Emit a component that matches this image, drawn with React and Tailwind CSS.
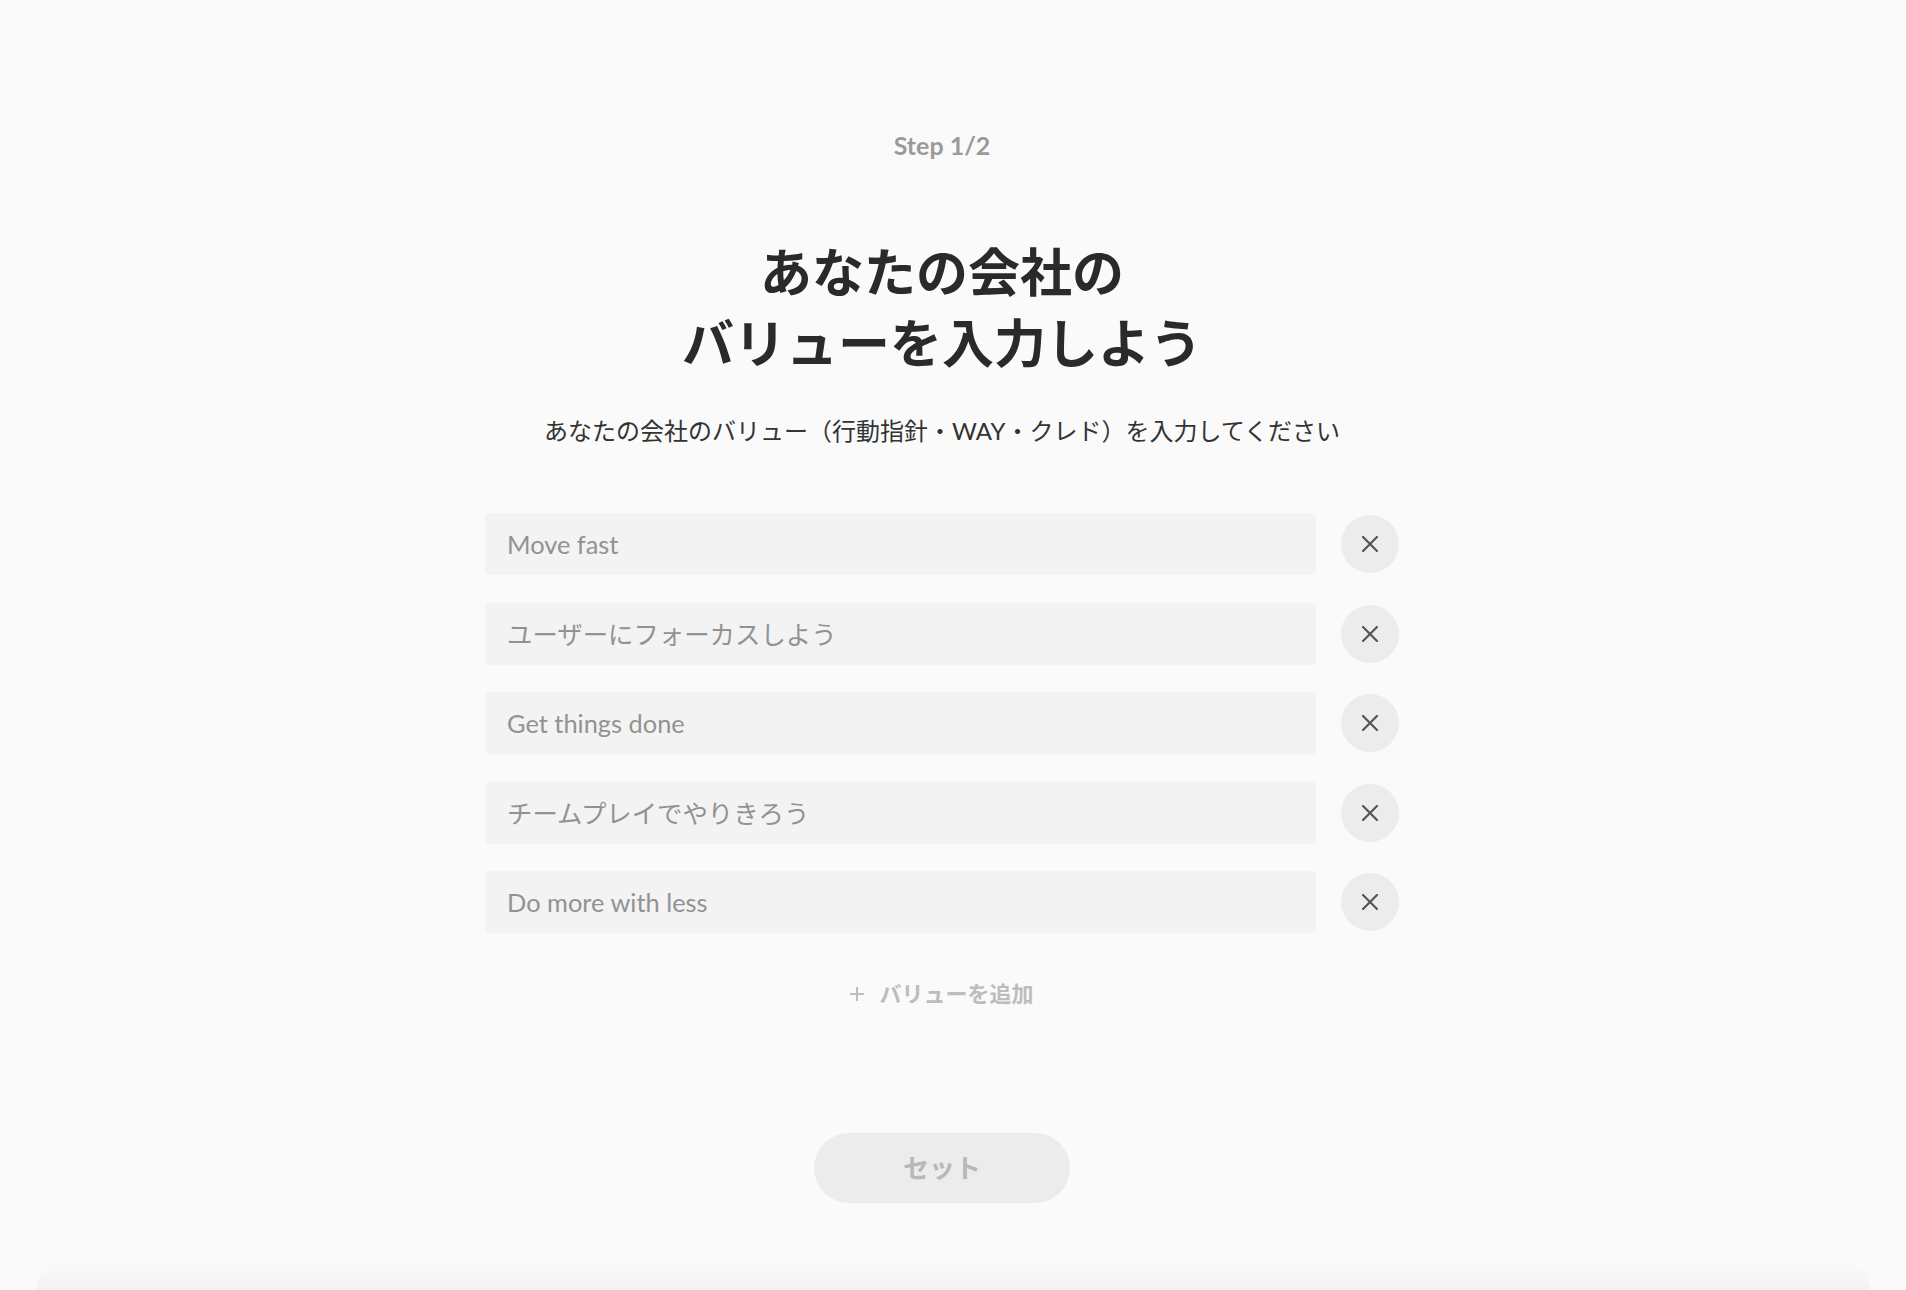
import React, { useState } from 'react';

const defaultValues = [
  'Move fast',
  'ユーザーにフォーカスしよう',
  'Get things done',
  'チームプレイでやりきろう',
  'Do more with less',
];

const font = { fontFamily: 'Lato, "Noto Sans CJK JP", sans-serif' };

const App = () => {
  const [values, setValues] = useState(defaultValues.map((p) => ({ placeholder: p, text: '' })));

  const removeValue = (index) => {
    setValues(values.filter((_, i) => i !== index));
  };

  const addValue = () => {
    setValues([...values, { placeholder: '', text: '' }]);
  };

  return (
    <div className="min-h-screen flex flex-col bg-[#fafafa]" style={font}>
      <div className="flex flex-col items-center pr-[22px] pt-[129px]">
        {/* Step */}
        <p className="text-[25px] leading-[32px] font-bold text-[#9a9a9a]">Step 1/2</p>

        {/* Title */}
        <h1 className="mt-[76px] text-center text-[52px] leading-[71px] font-bold text-[#2a2a2a]">
          あなたの会社の
          <br />
          バリューを入力しよう
        </h1>

        <p className="mt-[34px] text-[24px] leading-[36px] text-[#333333]">
          あなたの会社のバリュー（行動指針・WAY・クレド）を入力してください
        </p>

        {/* Value inputs */}
        <div className="mt-[64px] flex flex-col gap-[27.6px]">
          {values.map((v, i) => (
            <div key={i} className="flex items-center gap-[25px]">
              <input
                type="text"
                className="w-[831px] h-[62px] rounded-[4px] bg-[#f3f3f3] px-[22px] text-[25.4px] text-[#333333] placeholder:text-[#929292] focus:outline-none"
                placeholder={v.placeholder}
                value={v.text}
                onChange={(e) => {
                  const next = [...values];
                  next[i] = { ...next[i], text: e.target.value };
                  setValues(next);
                }}
              />
              <button
                type="button"
                onClick={() => removeValue(i)}
                className="w-[58px] h-[58px] rounded-full bg-[#ececec] flex items-center justify-center"
              >
                <svg width="16" height="16" viewBox="0 0 16 16" fill="none">
                  <path d="M1 1L15 15M15 1L1 15" stroke="#555555" strokeWidth="2.2" strokeLinecap="square" />
                </svg>
              </button>
            </div>
          ))}
        </div>

        {/* Add value */}
        <button
          type="button"
          onClick={addValue}
          className="mt-[45px] flex items-center gap-[15px] text-[22px] leading-[32px] font-bold text-[#bdbdbd]"
        >
          <svg width="14" height="14" viewBox="0 0 14 14" fill="none">
            <path d="M7 0V14M0 7H14" stroke="#bdbdbd" strokeWidth="2" />
          </svg>
          バリューを追加
        </button>

        {/* Submit */}
        <button
          type="button"
          className="mt-[123px] w-[256px] h-[70px] rounded-full bg-[#ececec] text-[26px] font-bold text-[#b8b8b8]"
        >
          セット
        </button>
      </div>

      {/* Faint sheet edge at the bottom */}
      <div className="mt-auto mx-[36px] h-[30px] rounded-t-[60px] bg-gradient-to-b from-[#fafafa] via-[#f7f7f7] to-[#f3f3f3]" />
    </div>
  );
};

export default App;
